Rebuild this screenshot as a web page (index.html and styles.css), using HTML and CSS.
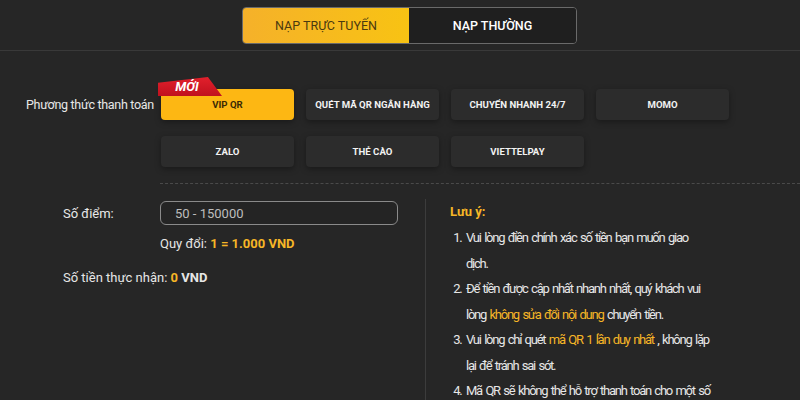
FILE: index.html
```html
<!DOCTYPE html>
<html lang="vi">
<head>
    <meta charset="UTF-8">
    <meta name="viewport" content="width=device-width, initial-scale=1.0">
    <title>Nạp tiền</title>
    <link rel="stylesheet" href="styles.css">
</head>
<body>
    <div class="top">
        <div class="tabs">
            <button class="tab active">NẠP TRỰC TUYẾN</button>
            <button class="tab">NẠP THƯỜNG</button>
        </div>
    </div>

    <div class="methods">
        <div class="methods-label">Phương thức thanh toán</div>
        <div class="method-grid">
            <button class="method selected">
                <span class="ribbon">MỚI</span>
                VIP QR
            </button>
            <button class="method">QUÉT MÃ QR NGÂN HÀNG</button>
            <button class="method">CHUYỂN NHANH 24/7</button>
            <button class="method">MOMO</button>
            <button class="method">ZALO</button>
            <button class="method">THẺ CÀO</button>
            <button class="method">VIETTELPAY</button>
        </div>
    </div>

    <div class="divider"></div>

    <div class="form">
        <div class="form-left">
            <div class="field">
                <label for="diem">Số điểm:</label>
                <input type="text" id="diem" placeholder="50 - 150000">
            </div>
            <div class="rate">Quy đổi: <b class="gold">1 = 1.000 VND</b></div>
            <div class="total">Số tiền thực nhận: <b class="gold">0</b> <b>VND</b></div>
        </div>

        <div class="form-right">
            <div class="note-title">Lưu ý:</div>
            <ol class="notes">
                <li>Vui lòng điền chính xác số tiền bạn muốn giao dịch.</li>
                <li>Để tiền được cập nhất nhanh nhất, quý khách vui lòng <span class="gold">không sửa đổi nội dung</span> chuyển tiền.</li>
                <li>Vui lòng chỉ quét <span class="gold">mã QR 1 lần duy nhất</span> , không lặp lại để tránh sai sót.</li>
                <li>Mã QR sẽ không thể hỗ trợ thanh toán cho một số ngân hàng.</li>
            </ol>
        </div>
    </div>
</body>
</html>
```

FILE: styles.css
```css
/* Nền và font chung */
body {
    margin: 0;
    background-color: #262626;
    color: #e6e6e6;
    font-family: Roboto, "Liberation Sans", sans-serif;
    overflow: hidden;
}

b {
    font-weight: bold;
}

.gold {
    color: #f6b626;
}

/* Tabs trên cùng */
.top {
    height: 51px;
    border-bottom: 1px solid #393939;
    box-sizing: border-box;
    padding: 7px 0 0 242px;
}

.tabs {
    display: flex;
    width: 335px;
    height: 37px;
    border: 1px solid #6a6a6a;
    border-radius: 4px;
    overflow: hidden;
    box-sizing: border-box;
}

.tab {
    flex: 1;
    border: none;
    background: #1f1f1f;
    color: #ffffff;
    font-family: inherit;
    font-size: 12.5px;
    font-weight: 500;
}

.tab.active {
    flex: 0 0 166px;
    background: linear-gradient(90deg, #f5b12a, #f8c313);
    color: #4a3a10;
    font-weight: 400;
}

/* Phương thức thanh toán */
.methods {
    display: flex;
    padding: 38px 0 0 26px;
}

.methods-label {
    width: 135px;
    height: 31px;
    line-height: 31px;
    font-size: 12.5px;
    letter-spacing: -0.3px;
    color: #e8e8e8;
}

.method-grid {
    display: grid;
    grid-template-columns: repeat(4, 133px);
    column-gap: 12px;
    row-gap: 16px;
}

.method {
    position: relative;
    height: 31px;
    border: none;
    border-radius: 4px;
    background: #2c2c2c;
    box-shadow: 0 2px 6px rgba(0, 0, 0, 0.35);
    color: #f2f2f2;
    font-family: inherit;
    font-size: 9.6px;
    font-weight: bold;
}

.method.selected {
    background: #fdb713;
    color: #3b2a05;
}

/* Nhãn MỚI */
.ribbon {
    position: absolute;
    left: -3px;
    top: -12px;
    width: 64px;
    height: 19px;
    line-height: 19px;
    background: linear-gradient(180deg, #e2202c, #c0111e);
    clip-path: polygon(0 30%, 78% 0, 100% 100%, 0 100%);
    color: #ffffff;
    font-size: 13px;
    font-weight: bold;
    font-style: italic;
    text-align: center;
    text-indent: -6px;
}

/* Đường kẻ */
.divider {
    margin: 16px 0 0 160px;
    border-top: 1px dashed #4a4a4a;
}

/* Form nạp */
.form {
    display: flex;
    padding-top: 15px;
}

.form-left {
    width: 362px;
    padding: 2px 0 0 63px;
    font-size: 13px;
}

.field {
    display: flex;
    align-items: center;
}

.field label {
    width: 97px;
    color: #e8e8e8;
}

.field input {
    width: 238px;
    height: 24px;
    box-sizing: border-box;
    padding: 0 14px;
    border: 1px solid #8a8a8a;
    border-radius: 6px;
    background: #242424;
    color: #ddd;
    font-family: inherit;
    font-size: 13px;
}

.field input::placeholder {
    color: #bdbdbd;
}

.rate {
    margin: 11px 0 0 97px;
}

.total {
    margin-top: 19px;
}

.form-right {
    border-left: 1px solid #3c3c3c;
    padding: 4px 0 0 24px;
    width: 260px;
    font-size: 13px;
}

.note-title {
    color: #f6b626;
    font-weight: bold;
    line-height: 18px;
}

.notes {
    margin: 4px 0 0;
    padding-left: 15px;
    line-height: 25.5px;
    letter-spacing: -1.25px;
    word-spacing: 1.5px;
    color: #e6e6e6;
}

.notes li {
    padding-left: 1px;
}
```
